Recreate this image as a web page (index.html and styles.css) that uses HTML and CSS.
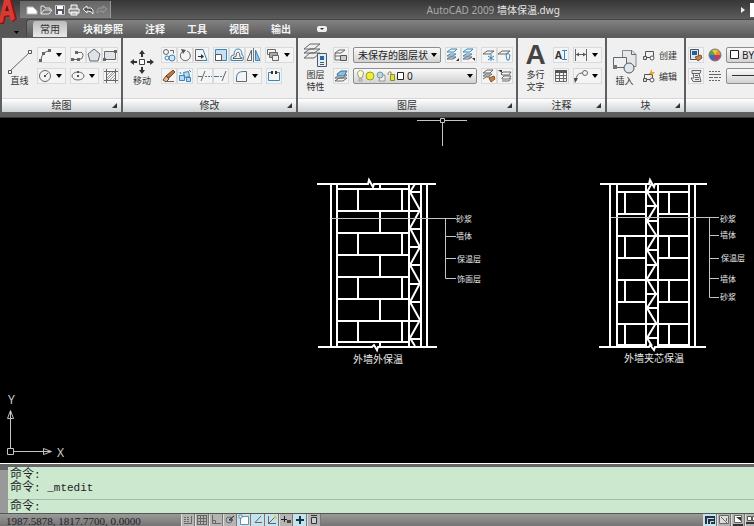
FILE: index.html
```
<!DOCTYPE html>
<html lang="zh-CN">
<head>
    <meta charset="utf-8">
    <title>AutoCAD 2009 墙体保温.dwg</title>
    <link rel="stylesheet" href="styles.css">
</head>
<body>
    <header class="top">
        <button class="app-menu" aria-label="菜单">
            <svg width="20" height="37" viewBox="0 0 20 37">
                <path d="M0 20 L5 0 H12 L17 19 L13 22 L11 17 L6 17 L4 24 L0 24Z" fill="#8f1515"/>
                <path d="M0 17 L4 0 H10 L15 19 L11 21 L9 15 L4 16 L3 22 L0 23Z" fill="#dc3832"/>
                <path d="M5 11 L7 5 L9 11Z" fill="#5b1616"/>
                <path d="M14 31h5l-2.500 3z" fill="#000"/>
            </svg>
        </button>
        <div class="titlebar">
            <div class="quick">
                <button aria-label="新建"><svg width="14" height="12"><path d="M2 10V3h6l4 4v3z" fill="#fff" stroke="#bbb"/></svg></button>
                <button aria-label="打开"><svg width="14" height="12"><path d="M2 10V2h3l1 2h5v2M2 10l3-4h8l-3 4z" fill="none" stroke="#e6e6e6"/></svg></button>
                <button aria-label="保存"><svg width="14" height="12"><path d="M2.500 1.500h9v9h-9z" fill="#556" stroke="#ccc"/><path d="M4 2h6v3H4zM5 7h4v3H5z" fill="#fff"/></svg></button>
                <button aria-label="打印"><svg width="14" height="12"><path d="M4 5V1h6v4M2 5h10v4H2zM4 8h6v3H4z" fill="#888" stroke="#fff"/></svg></button>
                <button aria-label="放弃"><svg width="14" height="12"><path d="M2 5l4-3v2h4q3 1 2 6q-1-3-6-3v2z" fill="#555" stroke="#eee"/></svg></button>
                <button aria-label="重做"><svg width="14" height="12"><path d="M12 5l-4-3v2H4q-2 1-2 5q2-2 6-2v2z" fill="#777" stroke="#999"/></svg></button>
            </div>
            <div class="title">AutoCAD 2009 <span>墙体保温.dwg</span></div>
            <svg width="5" height="8"><path d="M0 1l4 3-4 3z" fill="#eee"/></svg>
            <input class="search" type="text" aria-label="搜索">
        </div>
        <nav class="tabs">
            <a href="#" class="active">常用</a>
            <a href="#">块和参照</a>
            <a href="#">注释</a>
            <a href="#">工具</a>
            <a href="#">视图</a>
            <a href="#">输出</a>
            <button class="collapse" aria-label="最小化"><svg width="10" height="6"><rect width="10" height="6" rx="2" fill="#eee"/><path d="M3 2h4L5 4z" fill="#333"/></svg></button>
        </nav>
    </header>

    <main class="ribbon">
        <section class="panel">
            <div class="panel-body">
                <button class="big">
                    <svg width="26" height="26"><path d="M3 22L23 3" stroke="#666"/><path d="M1.500 21.500h3v3h-3zM21.500 1.500h3v3h-3z" fill="#fff" stroke="#555"/></svg>
                    直线
                </button>
                <div class="rows">
                    <div class="row">
                        <div class="group">
                            <button class="tool drop" aria-label="圆弧"><svg width="14" height="14"><path d="M3 12Q4 3 12 3" class="ln"/><path d="M1 11h3v3H1zM4 4h3v3H4zM10 1h3v3h-3z" fill="#666"/></svg></button>
                        </div>
                        <div class="group">
                            <button class="tool" aria-label="多段线"><svg width="14" height="14"><path d="M1 11.500h7q4 0 4-4t-4-3H5" class="ln"/><path d="M0 10h3v3H0zM6 10h3v3H6zM4 3h3v3H4z" fill="#666"/></svg></button>
                            <button class="tool" aria-label="多边形"><svg width="14" height="14"><path d="M7 1l6 5-2 7H3L1 6z" fill="#dde3e8" stroke="#666"/></svg></button>
                            <button class="tool" aria-label="矩形"><svg width="14" height="14"><path d="M1.500 3.500h11v8h-11z" fill="#dde3e8" stroke="#666"/><path d="M0 10h3v3H0zM11 2h3v3h-3z" fill="#666"/></svg></button>
                        </div>
                    </div>
                    <div class="row">
                        <div class="group">
                            <button class="tool drop" aria-label="圆"><svg width="14" height="14"><circle cx="7" cy="7" r="5.500" class="ln"/><path d="M7 7l3-3" class="ln"/><path d="M6 6h2v2H6z" fill="#555"/></svg></button>
                        </div>
                        <div class="group">
                            <button class="tool drop" aria-label="椭圆"><svg width="14" height="14"><ellipse cx="7" cy="7" rx="6" ry="4" class="ln"/><path d="M6 6h2v2H6zM6 2h2v2H6z" fill="#555"/></svg></button>
                        </div>
                        <div class="group">
                            <button class="tool" aria-label="图案填充"><svg width="14" height="14"><path d="M2.500 0v14M11.500 0v14M0 2.500h14M0 11.500h14" class="ln"/><path d="M3 6l3-3M3 9l6-6M3 11l8-8M6 11l5-5M9 11l2-2" stroke="#999"/></svg></button>
                        </div>
                    </div>
                </div>
            </div>
            <footer>绘图<i></i></footer>
        </section>

        <section class="panel">
            <div class="panel-body">
                <button class="big wide">
                    <svg width="26" height="26"><path d="M10.500 10.500h5v5h-5z" fill="#fff" stroke="#444"/><path d="M13 1l3 4h-2v3h-2V5h-2zM13 25l3-4h-2v-3h-2v3h-2zM1 13l4-3v2h3v2H5v2zM25 13l-4-3v2h-3v2h3v2z" fill="#333"/></svg>
                    移动
                </button>
                <div class="rows">
                    <div class="row">
                        <div class="group">
                            <button class="tool" aria-label="复制"><svg width="14" height="14"><circle cx="4" cy="4" r="2.500" class="ln"/><circle cx="5" cy="10" r="2" class="bl"/><circle cx="10" cy="10" r="3" fill="#cfe6f5" stroke="#3b85b8"/><path d="M8 2.500h3.500v3" class="ln"/></svg></button>
                            <button class="tool" aria-label="旋转"><svg width="14" height="14"><path d="M9 3a5 5 0 1 1-5 1" class="ln"/><path d="M3 1l5 1-3 4z" fill="#555"/></svg></button>
                            <button class="tool" aria-label="拉伸"><svg width="14" height="14"><path d="M7 1.500H1.500v11H7" class="ln"/><path d="M7 1.500h2l4 11H7" class="bl"/><path d="M4 8.500h4" stroke="#333"/><path d="M7 6l3 2.500L7 11z" fill="#333"/></svg></button>
                        </div>
                        <div class="group">
                            <button class="tool" aria-label="缩放"><svg width="14" height="14"><path d="M1.500 1.500h11v11h-11z" fill="#c4e0f2" stroke="#3b85b8"/><path d="M1.500 6.500h6v6h-6z" fill="#fff" stroke="#555"/></svg></button>
                            <button class="tool" aria-label="偏移"><svg width="14" height="14"><path d="M1 12.500V9q0-2 3-2Q4 1 8 1t4 6q2 0 1 5.500z" class="bl"/><path d="M3 10.500q0-2 3-2Q6 4 8 4t2 5q2 0 2 1.500z" class="ln"/></svg></button>
                            <button class="tool" aria-label="镜像"><svg width="14" height="14"><path d="M5.500 2v10.500H1z" class="ln"/><path d="M9.500 2v10.500H14z" fill="#8dc5e8" stroke="#3b85b8"/><path d="M7.500 0v14" stroke="#777"/></svg></button>
                        </div>
                        <div class="group">
                            <button class="tool drop" aria-label="绘图次序"><svg width="14" height="14"><path d="M1.500 1.500h8v5h-8z" class="ln"/><path d="M3.500 4.500h8v5h-8z" fill="#aaa" stroke="#666"/><path d="M6.500 7.500h6v5h-6z" fill="#eee" stroke="#666"/></svg></button>
                        </div>
                    </div>
                    <div class="row">
                        <div class="group">
                            <button class="tool" aria-label="删除"><svg width="14" height="14"><path d="M11 1l2 2-6 6-3-2z" fill="#b97945" stroke="#744623"/><path d="M4 7l3 3-3 3-3-2z" fill="#e5b58f" stroke="#744623"/><path d="M4 12.500h8" class="ln"/></svg></button>
                            <button class="tool" aria-label="分解"><svg width="14" height="14"><path d="M1.500 6.500h5v5h-5zM5.500 3.500l5-1 1 5-5 1zM8.500 8.500h4v4h-4z" fill="#b9dcf1" stroke="#3b85b8"/><path d="M11 1l2 2M2 3l1 2" class="bl"/></svg></button>
                        </div>
                        <div class="group">
                            <button class="tool" aria-label="修剪"><svg width="14" height="14"><path d="M0 7.500h4M3 12L7 2" class="ln"/><path d="M7 7.500h7" class="bl dash"/></svg></button>
                            <button class="tool" aria-label="延伸"><svg width="14" height="14"><path d="M0 7.500h3M8 12l4-10" class="ln"/><path d="M3 7.500h7" class="bl dash"/></svg></button>
                        </div>
                        <div class="group">
                            <button class="tool drop" aria-label="圆角"><svg width="14" height="14"><path d="M2.500 9v3.500h10v-10H9" class="ln"/><path d="M2.500 9q0-6.500 6.500-6.500" class="bl"/></svg></button>
                        </div>
                        <div class="group">
                            <button class="tool" aria-label="打断"><svg width="14" height="14"><path d="M5 3.500H1.500v8h11v-8H9" class="bl"/><path d="M4 2h2v3H4zM8 2h2v3H8z" fill="#333"/></svg></button>
                        </div>
                    </div>
                </div>
            </div>
            <footer>修改<i></i></footer>
        </section>

        <section class="panel">
            <div class="panel-body roomy">
                <button class="big">
                    <svg width="26" height="26"><path d="M1 15l6-5h10l-6 5zM1 10l6-4h10l-6 4zM1 6l6-5h10l-6 5z" fill="#eee" stroke="#666"/><path d="M14.500 10.500h9v13h-9z" fill="#e5edf4" stroke="#455a70"/><path d="M17 13h4v4h-4z" fill="#2f65a0"/><path d="M17 19.500h4M17 21.500h4" stroke="#455a70"/></svg>
                    图层<br>特性
                </button>
                <div class="rows">
                    <div class="row">
                        <div class="group">
                            <button class="tool" aria-label="图层状态"><svg width="14" height="14"><path d="M1 5l4-3h6L7 5zM1 5v3h5M1 8v4h5" class="ln"/><path d="M6.500 7.500h6v5h-6z" fill="#ccc" stroke="#555"/></svg></button>
                        </div>
                        <div class="pick">
                            <select class="combo layer-state" aria-label="图层状态列表"><option>未保存的图层状态</option></select>
                        </div>
                        <div class="group">
                            <button class="tool" aria-label="置为当前"><svg width="14" height="14"><path d="M1 4l4-3h6L8 4zM1 8l3-2h6L7 8z" class="bl"/><path d="M1 11l3-2h6l-3 2z" class="ln"/><path d="M13 10v3h-3z" fill="#333"/></svg></button>
                            <button class="tool" aria-label="上一个"><svg width="14" height="14"><path d="M1 4l4-3h6L8 4zM1 8l3-2h6L7 8z" class="bl"/><path d="M1 11l3-2h6l-3 2z" class="ln"/><path d="M10 10h3v3z" fill="#333"/></svg></button>
                        </div>
                        <div class="group">
                            <button class="tool" aria-label="冻结"><svg width="14" height="14"><path d="M1 6l4-3h7L8 6z" class="ln"/><path d="M9 6v7M6 8l6 4M6 12l6-4" class="bl"/></svg></button>
                            <button class="tool" aria-label="关闭"><svg width="14" height="14"><path d="M0 6l4-3h8L8 6z" class="ln"/><path d="M8 7q2-3 4 0l-1 5H9z" class="bl"/></svg></button>
                        </div>
                    </div>
                    <div class="row">
                        <div class="group">
                            <button class="tool" aria-label="隔离"><svg width="14" height="14"><path d="M1 9l4-3h8l-4 3zM1 12l4-3h8l-4 3z" class="ln"/><path d="M3 5l4-3h6l-3 5H4z" fill="#8cc0e0" stroke="#3b6f98"/></svg></button>
                        </div>
                        <div class="pick">
                            <select class="combo layer" aria-label="图层"><option>0</option></select>
                            <svg class="marks" width="50" height="12">
                                <path d="M2 5a3 3 0 1 1 5 0l-1 3H3zM3 9h3v2H3z" fill="#ffffc0" stroke="#999"/>
                                <circle cx="14" cy="6" r="4" fill="#eef02c" stroke="#999a35"/>
                                <path d="M24 5h5v6h-6z" fill="#eee" stroke="#999"/><circle cx="24" cy="5" r="3" fill="#bcd6e0" stroke="#7796a0"/>
                                <path d="M32 5q0-4 3-3v4" fill="none" stroke="#8c8b31"/><path d="M34.500 4.500h4v6h-4z" fill="#e4df3c" stroke="#8c8b31"/>
                                <path d="M41.500 2.500h6v7h-6z" fill="#fff" stroke="#222"/>
                            </svg>
                        </div>
                        <div class="group">
                            <button class="tool" aria-label="匹配"><svg width="14" height="14"><path d="M1 4l4-3h6L8 4zM1 7l3-2h6L7 7zM1 10l3-2h4" class="ln"/><path d="M7 9l5-2 1 3-4 3z" fill="#c88243" stroke="#8c552a"/></svg></button>
                            <button class="tool" aria-label="漫游"><svg width="14" height="14"><path d="M3 5l2-2h8l-2 3H4zM4 9l2-2h7l-2 3H4zM4 12h7l2-3" class="ln"/><path d="M0 1h4v3z" fill="#333"/></svg></button>
                        </div>
                    </div>
                </div>
            </div>
            <footer>图层<i></i></footer>
        </section>

        <section class="panel">
            <div class="panel-body roomy">
                <button class="big">
                    <span class="letter">A</span>
                    多行<br>文字
                </button>
                <div class="rows">
                    <div class="row">
                        <div class="group"><button class="tool text-tool" aria-label="单行文字">A<svg width="5" height="12"><path d="M0 1.500h5M0 10.500h5M2.500 1v10" class="bl"/></svg></button></div>
                        <div class="group"><button class="tool drop" aria-label="线性标注"><svg width="14" height="14"><path d="M1.500 1v12M12.500 1v12M1 6.500h12" class="ln"/><path d="M2 6.500l3-2v4zM12 6.500l-3-2v4z" fill="#555"/></svg></button></div>
                    </div>
                    <div class="row">
                        <div class="group"><button class="tool" aria-label="表格"><svg width="14" height="14"><path d="M1.500 1.500h11v11h-11zM1.500 6.500h11M1.500 9.500h11M5.500 4v9M9.500 4v9" class="ln"/><path d="M1 1h12v3H1z" fill="#555"/></svg></button></div>
                        <div class="group"><button class="tool drop" aria-label="多重引线"><svg width="14" height="14"><path d="M2 12q0-8 6-8" class="ln"/><circle cx="11" cy="4" r="2.500" class="ln"/><path d="M0 9h4l-3 5z" fill="#444"/></svg></button></div>
                    </div>
                </div>
            </div>
            <footer>注释<i></i></footer>
        </section>

        <section class="panel">
            <div class="panel-body">
                <button class="big">
                    <svg width="26" height="26"><path d="M10.500 1.500H20l4 4v12H10.500z" fill="#e4e8eb" stroke="#888"/><path d="M19.500 1.500v4H24" class="ln"/><path d="M1.500 8.500h13v10h-13z" fill="#edf1f4" stroke="#666"/><path d="M1 16h4v4H1z" fill="#777"/><circle cx="17" cy="19" r="5" fill="#dfe7ed" stroke="#555"/></svg>
                    插入
                </button>
                <div class="rows">
                    <button class="text-btn"><svg width="14" height="14"><path d="M3.500 3.500h8v6h-8z" fill="#eef1f4" stroke="#555"/><path d="M1.500 8.500h3v3h-3z" fill="#ddd" stroke="#555"/><circle cx="10" cy="10" r="2" fill="#fff" stroke="#555"/></svg>创建</button>
                    <button class="text-btn"><svg width="14" height="14"><path d="M2.500 5.500h8v5h-8z" fill="#eef1f4" stroke="#555"/><path d="M1.500 9.500h3v3h-3z" fill="#ddd" stroke="#555"/><circle cx="10" cy="11" r="2" fill="#fff" stroke="#555"/><path d="M10 0l-3 5h3l-2 4 5-6h-3z" fill="#f0a52d"/></svg>编辑</button>
                </div>
            </div>
            <footer>块<i></i></footer>
        </section>

        <section class="panel last">
            <div class="panel-body">
                <div class="rows">
                    <div class="row">
                        <div class="group"><button class="tool" aria-label="特性匹配"><svg width="14" height="14"><path d="M1.500 1.500h8v10h-8z" fill="#dce6ef" stroke="#456"/><path d="M3 3h5v4H3z" fill="#285f96"/><path d="M6 9l6-2 1 3-4 3z" fill="#c88243" stroke="#8c552a"/></svg></button></div>
                        <svg width="14" height="16"><g transform="translate(0 1)"><path d="M7 7V1a6 6 0 0 1 6 6z" fill="#e98c35"/><path d="M7 7h6a6 6 0 0 1-6 6z" fill="#c53b64"/><path d="M7 7v6a6 6 0 0 1-6-6z" fill="#4367ba"/><path d="M7 7H1a6 6 0 0 1 6-6z" fill="#5ba345"/><path d="M7 7L4 2q3-2 6 0z" fill="#e9ca36"/><circle cx="7" cy="7" r="6" fill="none" stroke="#777"/></g></svg>
                        <div class="pick">
                            <select class="combo color" aria-label="颜色"><option>BYLAYER</option></select>
                            <svg class="marks" width="12" height="12"><path d="M1.500 1.500h8v8h-8z" fill="#fff" stroke="#222"/></svg>
                        </div>
                    </div>
                    <div class="row">
                        <div class="group"><button class="tool" aria-label="列表"><svg width="14" height="14"><path d="M3 1.500h9l-1 3H3zM4 4.500h6l2 8H4L2 9h3z" fill="#e7ebef" stroke="#666"/><path d="M6 6.500h3M6 8.500h4M6 10.500h4" class="ln"/></svg></button></div>
                        <svg width="14" height="16"><path d="M1 3.500h12M1 12.500h12" class="ln dash"/><path d="M1 6.500h12" class="ln"/><path d="M1 9.500h12" stroke="#666" stroke-dasharray="4 1"/></svg>
                        <div class="pick">
                            <select class="combo color" aria-label="线型"><option></option></select>
                            <svg class="marks" width="30" height="12"><path d="M3 5.500h27" stroke="#333"/></svg>
                        </div>
                    </div>
                </div>
            </div>
            <footer></footer>
        </section>
    </main>

    <div class="canvas">
        <svg viewBox="0 118 754 345" preserveAspectRatio="xMinYMax meet">
            <!-- crosshair -->
            <path class="thin" d="M417 120.500H440M444 120.500H467M442.500 123V146M440.500 118.500h4v4h-4z"/>

            <!-- external insulation wall -->
            <g class="wall">
                <path d="M317 184H368l1-4 4 7 1-3H436M318 347H372l2-2 3 5 1-3H437"/>
                <path d="M331 183V347M337 183V347M409 183V347M421 183V347M427 183V347"/>
                <path d="M336 189H409M336 211H421M336 233H409M336 255H409M336 277H409M336 299H409M336 321H421M336 342H409"/>
                <path d="M358 188V210M358 232V254M358 276V298M358 320V342M402 188V210M402 232V254M402 276V298M402 320V342"/>
                <path d="M380 183V188M380 210V232M380 254V276M380 298V320M380 342V347"/>
                <path d="M409 192H421M409 229H421M409 247H421M409 265H421M409 284H421M409 302H421M409 339H421"/>
                <path d="M415 184L410 192 420 210 410 228 420 247 410 265 420 283 410 302 420 320 410 338 415 346"/>
            </g>
            <path class="thin" d="M331 218.500H456M445.500 218V278.500H456M445 236.500H456M445 258.500H456"/>
            <g class="note">
                <text x="456" y="222">砂浆</text>
                <text x="456" y="239">墙体</text>
                <text x="457" y="262">保温层</text>
                <text x="457" y="282">饰面层</text>
            </g>
            <text class="caption" x="353" y="363">外墙外保温</text>

            <!-- sandwich insulation wall -->
            <g class="wall">
                <path d="M600 184H649l1-4 4 7 1-3H707M599 347H649l1-2 4 5 1-3H706"/>
                <path d="M610 183V347M617 183V347M646 183V347M658 183V347M689 183V347M695 183V347"/>
                <path d="M616 192H689M616 214H646M657 214H689M616 236H689M616 258H646M657 258H689M616 280H689M616 302H646M657 302H689M616 324H689M616 345H646M657 345H689"/>
                <path d="M625 191V213M625 235V257M625 279V301M625 323V345M669 191V213M669 235V257M669 279V301M669 323V345"/>
                <path d="M646 206H657M646 221H657M646 250H657M646 265H657M646 294H657M646 308H657M646 338H657"/>
                <path d="M652 183L647 192 656 206 647 221 656 235 647 250 656 264 647 279 656 294 647 308 656 323 647 338 652 346"/>
            </g>
            <path class="thin" d="M611 217.500H719M709.500 218V297.500H719M709 235.500H719M709 258.500H719M709 278.500H719"/>
            <g class="note">
                <text x="720" y="222">砂浆</text>
                <text x="720" y="238">墙体</text>
                <text x="721" y="261">保温层</text>
                <text x="720" y="282">墙体</text>
                <text x="720" y="300">砂浆</text>
            </g>
            <text class="caption" x="624" y="362">外墙夹芯保温</text>

            <!-- UCS icon -->
            <path class="thin" d="M7.500 448.500h6v6h-6zM10.500 448V411M14 451.500H51M7.500 418.500h6l-3-8zM43.500 448.500v6l8-3z"/>
            <text class="axis" x="8" y="404">Y</text>
            <text class="axis" x="57" y="457">X</text>
        </svg>
    </div>

    <section class="command">
        <div class="grip"></div>
        <div class="console">
            <p><span>命令</span>:</p>
            <p><span>命令</span>: _mtedit</p>
            <div class="prompt">
                <label for="cmd"><span>命令</span>:</label>
                <input type="text" id="cmd">
            </div>
        </div>
    </section>

    <footer class="status">
        <div class="coords">1987.5878, 1817.7700, 0.0000</div>
        <div class="modes">
            <button aria-label="捕捉"><svg width="12" height="12"><path d="M2 3.500h6M2 5.500h6M2 7.500h6" class="ln dash"/><path d="M9.500 2v7.500H2" class="ln"/></svg></button>
            <button aria-label="栅格"><svg width="12" height="12"><path d="M1 1.500h10M1 4.500h10M1 7.500h10M1 10.500h10M1.500 1v10M4.500 1v10M7.500 1v10M10.500 1v10" class="ln"/></svg></button>
            <button aria-label="正交"><svg width="12" height="12"><path d="M2.500 1v8.500H11M3 6.500h2.500v3" class="ln"/></svg></button>
            <button aria-label="极轴"><svg width="12" height="12"><circle cx="5" cy="6" r="3" class="ln"/><path d="M5 6l5-4M5 6h4" stroke="#222"/></svg></button>
            <button class="on" aria-label="对象捕捉"><svg width="12" height="12"><path d="M2.500 2.500h8v8h-8z" fill="#fff" stroke="#6b8fa5"/><path d="M1 1h3v3H1z" fill="#fff" stroke="#6b8fa5"/></svg></button>
            <button class="on" aria-label="对象追踪"><svg width="12" height="12"><path d="M9 2L3 8.500h7" class="ln"/></svg></button>
            <button class="on" aria-label="DUCS"><svg width="12" height="12"><path d="M2.500 2v7.500H10M2 10l7-7" class="ln"/><path d="M9 0l1 3 2 1-3 1-1-2z" fill="#e5c435"/></svg></button>
            <button aria-label="DYN"><svg width="12" height="12"><path d="M4.500 2v6M1 5.500h6" stroke="#222"/><path d="M7 6h4v3H7z" fill="#444"/></svg></button>
            <button class="on" aria-label="线宽"><svg width="12" height="12"><path d="M6 2v8M2 6h8" stroke="#143746" stroke-width="2"/></svg></button>
            <button aria-label="快捷特性"><svg width="12" height="12"><path d="M3.500 3.500h5v6h-5zM3 1.500h6" fill="#ccc" stroke="#333"/></svg></button>
        </div>
        <div class="views">
            <button class="on" aria-label="模型"><svg width="12" height="12"><path d="M1 2h10v8H1z" fill="#234"/><path d="M3.500 10V4.500H10M6.500 10V7.500H10" stroke="#cde" fill="none"/></svg></button>
            <button aria-label="布局"><svg width="12" height="12"><path d="M1.500 1.500h9v8h-9z" fill="#ddd" stroke="#666"/><path d="M3 3l6 6M8.500 4v3" class="ln"/></svg></button>
            <button aria-label="快速查看布局"><svg width="12" height="12"><path d="M2.500 1.500h7v7h-7z" fill="#fff" stroke="#666"/><path d="M4 3h5v4zM1 10h10v2H1z" fill="#333"/></svg></button>
            <button aria-label="快速查看图形"><svg width="12" height="12"><path d="M1.500 2.500h4v4h-4zM6.500 2.500h4v4h-4z" fill="#fff" stroke="#555"/><path d="M0 9h12" stroke="#333" stroke-width="2"/></svg></button>
        </div>
    </footer>
</body>
</html>
```
FILE: styles.css
```
* {
    box-sizing: border-box;
}
body {
    margin: 0;
    height: 100vh;
    display: flex;
    flex-direction: column;
    overflow: hidden;
    background: #000;
    color: #333;
    font-family: "Noto Sans", "Noto Sans CJK SC", sans-serif;
    font-size: 10px;
}
button, select, input {
    font-family: inherit;
    font-size: inherit;
    color: inherit;
    margin: 0;
    padding: 0;
    border: none;
    background: none;
}
svg {
    display: block;
    flex: none;
}
.ln {
    fill: none;
    stroke: #666;
}
.bl {
    fill: none;
    stroke: #3b85b8;
}
.dash {
    stroke-dasharray: 2 1;
}

/* title and tabs */
.top {
    position: relative;
    background: #565656;
}
.app-menu {
    position: absolute;
    left: 0;
    top: 0;
}
.titlebar {
    display: flex;
    align-items: center;
    height: 19px;
    padding-left: 20px;
    background: linear-gradient(#363636, #5c5c5c);
}
.quick {
    display: flex;
    align-items: center;
    width: 91px;
    height: 17px;
    padding-left: 5px;
    background: linear-gradient(#666, #808080);
    border-right: 1px solid #999;
}
.title {
    flex: 1;
    padding-left: 43%;
    line-height: 16px;
    color: #aaa;
    white-space: nowrap;
}
.title span {
    color: #e4e4e4;
}
.search {
    width: 4px;
    height: 14px;
    margin-left: 4px;
    background: #fff;
}
.tabs {
    display: flex;
    align-items: center;
    height: 18px;
    margin-left: 26px;
    padding-left: 6px;
    background: linear-gradient(#828282, #5a5a5a);
    border: 1px solid #444;
    border-right: none;
    border-bottom: none;
    border-radius: 4px 0 0 0;
}
.tabs a {
    padding: 0 11px;
    line-height: 16px;
    color: #f4f4f4;
    font-weight: bold;
    text-decoration: none;
}
.tabs .active {
    margin-right: 5px;
    padding: 0 7px;
    background: linear-gradient(#bbb, #e9e9e9);
    border-radius: 3px 3px 0 0;
    color: #333;
    font-weight: normal;
}
.collapse {
    margin-left: 15px;
}

/* ribbon */
.ribbon {
    display: flex;
    gap: 2px;
    padding: 1px 0 5px 2px;
    background: #5e5e5e;
    border-bottom: 1px solid #333;
}
.panel {
    flex: none;
    background: #f0f0f0;
}
.panel.last {
    flex: 1;
    min-width: 0;
    overflow: hidden;
}
.panel-body {
    display: flex;
    gap: 2px;
    height: 60px;
    padding: 0 2px;
}
.panel-body.roomy {
    padding-right: 3px;
}
.panel footer {
    position: relative;
    height: 14px;
    line-height: 13px;
    text-align: center;
    background: linear-gradient(#fff, #cfd2d4);
    border-top: 1px solid #d6d6d6;
}
.panel footer i {
    position: absolute;
    right: 4px;
    bottom: 4px;
    border-left: 5px solid transparent;
    border-bottom: 5px solid #333;
}
.big {
    display: flex;
    flex-direction: column;
    align-items: center;
    justify-content: center;
    width: 31px;
    font-size: 9px;
    line-height: 12px;
}
.big.wide {
    width: 34px;
}
.letter {
    height: 26px;
    font: bold 28px/24px "Liberation Sans", sans-serif;
    color: #444;
}
.rows {
    display: flex;
    flex-direction: column;
    gap: 5px;
    padding-top: 9px;
}
.row {
    display: flex;
    gap: 4px;
}
.group {
    display: flex;
}
.tool {
    display: flex;
    align-items: center;
    width: 16px;
    height: 16px;
    background: #f4f4f4;
    border: 1px solid #d8dadc;
}
.tool.drop {
    width: 29px;
}
.tool.drop::after {
    content: "";
    margin-left: 4px;
    border: 3px solid transparent;
    border-top: 4px solid #000;
    border-bottom: none;
}
.text-tool {
    justify-content: center;
    font-weight: bold;
}
.text-btn {
    display: flex;
    align-items: center;
    gap: 3px;
    width: 40px;
    height: 16px;
    font-size: 9px;
    white-space: nowrap;
}

/* drop-downs */
.pick {
    position: relative;
}
.pick::after {
    content: "";
    position: absolute;
    right: 4px;
    top: 6px;
    border: 3px solid transparent;
    border-top: 4px solid #000;
    border-bottom: none;
    pointer-events: none;
}
.combo {
    appearance: none;
    display: block;
    height: 16px;
    padding: 0 12px 0 4px;
    border: 1px solid #8d8d8d;
    border-radius: 2px;
    background: linear-gradient(#fafafa, #d2d2d2);
    color: #222;
}
.layer-state {
    width: 88px;
}
.layer {
    width: 124px;
    padding-left: 53px;
}
.color {
    width: 90px;
    padding-left: 15px;
}
.marks {
    position: absolute;
    left: 3px;
    top: 2px;
    pointer-events: none;
}

/* drawing area */
.canvas {
    flex: 1;
    min-height: 0;
}
.canvas svg {
    width: 100%;
    height: 100%;
}
.wall {
    fill: none;
    stroke: #fff;
    stroke-width: 2;
}
.thin {
    fill: none;
    stroke: #c4c4c4;
}
.note {
    font-size: 8px;
    fill: #e6e6e6;
}
.caption {
    font-size: 10px;
    fill: #e6e6e6;
}
.axis {
    font-size: 12px;
    fill: #ccc;
}

/* command line */
.command {
    display: flex;
    border-top: 1px solid #fff;
    background: #cce8cf;
    color: #222;
    font-family: "Liberation Mono", "Noto Sans CJK SC", monospace;
    font-size: 11px;
    line-height: 13px;
    box-shadow: inset 0 3px #666;
}
.command span {
    font-size: 12px;
}
.grip {
    width: 8px;
    margin-top: 3px;
    background: #999;
    border-top: 3px solid #666;
}
.console {
    flex: 1;
    padding-top: 5px;
}
.console p {
    height: 13px;
    margin: 0;
    padding-left: 2px;
    white-space: pre;
}
.prompt {
    display: flex;
    height: 14px;
    margin-top: 4px;
    padding: 1px 0 0 2px;
    border-top: 1px solid #a5b9a8;
}
.prompt input {
    flex: 1;
    outline: none;
}

/* status bar */
.status {
    display: flex;
    height: 13px;
    background: linear-gradient(#9a9a9a, #747474);
    border-top: 1px solid #555;
}
.coords {
    width: 181px;
    padding-left: 6px;
    font: 11px/14px "Liberation Serif", serif;
    color: #222;
}
.modes, .views {
    display: flex;
}
.views {
    margin-left: auto;
    margin-right: -5px;
}
.modes button, .views button {
    width: 14px;
    height: 12px;
    background: #b4b4b4;
    border-left: 1px solid #ddd;
    border-right: 1px solid #777;
    overflow: hidden;
}
.modes .on, .views .on {
    background: #c3e4ee;
}
```
